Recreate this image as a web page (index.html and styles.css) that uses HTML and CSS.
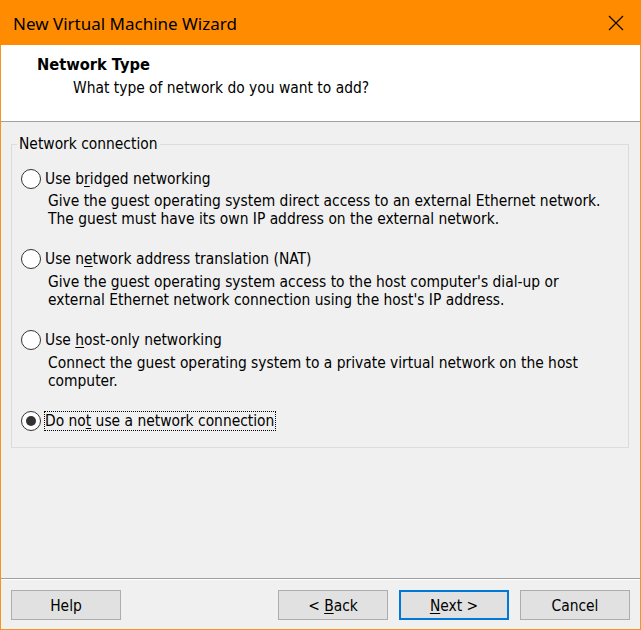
FILE: index.html
```html
<!DOCTYPE html>
<html>
<head>
<meta charset="utf-8">
<link rel="stylesheet" href="styles.css">
</head>
<body>
<div class="window">
  <div class="titlebar">
    <span class="title">New Virtual Machine Wizard</span>
    <svg class="close" width="16" height="16" viewBox="0 0 16 16"><path d="M1 1 L15 15 M15 1 L1 15" stroke="#000" stroke-width="1.1" fill="none"/></svg>
  </div>
  <div class="header">
    <div class="h-title">Network Type</div>
    <div class="h-sub">What type of network do you want to add?</div>
  </div>
  <div class="content">
    <fieldset class="group">
      <legend class="legend">Network connection</legend>
      <div class="option">
        <div class="opt-row"><span class="radio"></span><span class="label">Use b<u>r</u>idged networking</span></div>
        <div class="desc">Give the guest operating system direct access to an external Ethernet network.<br>The guest must have its own IP address on the external network.</div>
      </div>
      <div class="option">
        <div class="opt-row"><span class="radio"></span><span class="label">Use n<u>e</u>twork address translation (NAT)</span></div>
        <div class="desc">Give the guest operating system access to the host computer's dial-up or<br>external Ethernet network connection using the host's IP address.</div>
      </div>
      <div class="option">
        <div class="opt-row"><span class="radio"></span><span class="label">Use <u>h</u>ost-only networking</span></div>
        <div class="desc">Connect the guest operating system to a private virtual network on the host<br>computer.</div>
      </div>
      <div class="option">
        <div class="opt-row"><span class="radio checked"></span><span class="label focus">Do no<u>t</u> use a network connection</span></div>
      </div>
    </fieldset>
  </div>
  <div class="footer">
    <button class="btn">Help</button>
    <span class="spacer"></span>
    <button class="btn">&lt; <u>B</u>ack</button>
    <button class="btn default"><u>N</u>ext &gt;</button>
    <button class="btn">Cancel</button>
  </div>
</div>
</body>
</html>
```
FILE: styles.css
```css
html, body { margin: 0; padding: 0; background: #fff; }
.window {
  width: 641px; height: 630px; box-sizing: border-box;
  border: 1px solid #F7931E;
  display: flex; flex-direction: column;
  background: #F0F0F0;
  font-family: "DejaVu Sans Condensed", "DejaVu Sans", sans-serif;
  font-size: 15.4px; color: #000;
}
.titlebar {
  height: 44px; background: #FF8C00; margin: -1px -1px 0 -1px; padding-top: 1px;
  display: flex; align-items: center; justify-content: space-between;
  padding-left: 13px; padding-right: 17px;
  font-family: "Noto Sans", "Open Sans", sans-serif; font-size: 17px;
}
.title { color: #000; }
.close { display: block; }
.header {
  height: 76px; background: #fff; border-bottom: 1px solid #A0A0A0;
  box-sizing: content-box;
}
.h-title { font-weight: bold; padding-left: 36px; padding-top: 11px; line-height: 18px; font-size: 16.3px; }
.h-sub { padding-left: 72px; padding-top: 5px; line-height: 18px; }
.content { flex: 1; padding: 13px 11px 0 10px; }
.group {
  margin: 0; border: 1px solid #DCDCDC; height: 313px; box-sizing: border-box;
  padding: 15px 0 0 9px;
}
.legend { padding: 0 2px; margin-left: -4px; line-height: 18px; }
.option { margin-bottom: 20.8px; }
.opt-row { display: flex; align-items: center; height: 21px; }
.radio {
  width: 18px; height: 18px; border: 1px solid #333; border-radius: 50%;
  background: #fff; margin-right: 4px; position: relative; flex: none;
}
.radio.checked::after {
  content: ""; position: absolute; left: 4px; top: 4px; width: 10px; height: 10px;
  border-radius: 50%; background: #333;
}
.label u, .btn u { text-decoration-thickness: 1px; text-underline-offset: 2px; }
.label.focus { outline: 1px dotted #000; outline-offset: 0; padding-right: 1px; }
.desc { padding-left: 27px; line-height: 18px; margin-top: 3px; }
.footer {
  border-top: 1px solid #A0A0A0; box-shadow: inset 0 1px 0 #fff;
  display: flex; align-items: flex-start;
  padding: 11px 10px 0 10px; box-sizing: border-box; height: 51px;
  gap: 11px;
}
.spacer { flex: 1; }
.btn {
  width: 110px; height: 30px; margin: 0; padding: 1px 0 0 0;
  background: #E1E1E1; border: 1px solid #ADADAD;
  font-family: "DejaVu Sans Condensed", "DejaVu Sans", sans-serif; font-size: 15.4px; color: #000;
}
.btn.default { border: 2px solid #0078D7; }
```
